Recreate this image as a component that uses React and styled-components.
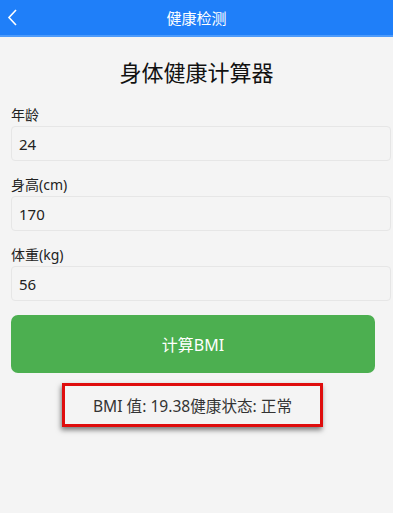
import React, { useState } from 'react';
import styled, { createGlobalStyle } from 'styled-components';

const GlobalStyle = createGlobalStyle`
    body {
        margin: 0;
        background: #f4f4f4;
        font-family: "Noto Sans", "Noto Sans CJK SC", sans-serif;
    }
`;

const Page = styled.div`
    min-height: 513px;
    background: #f4f4f4;
`;

const Header = styled.div`
    height: 35px;
    background: #1f7ff9;
    border-bottom: 2px solid #4d9bfb;
    position: relative;

    display: flex;
    align-items: center;
    justify-content: center;
`;

const HeaderTitle = styled.span`
    color: #fff;
    font-size: 15px;
    line-height: 20px;
`;

const BackButton = styled.div`
    position: absolute;
    left: 6px;
    top: 8px;
    width: 14px;
    height: 20px;
`;

const Main = styled.div`
    padding: 0 2px 0 11px;
`;

const Title = styled.h1`
    margin: 20px 0 0 0;
    font-size: 22px;
    line-height: 30px;
    font-weight: 400;
    color: #111;
    text-align: center;
    padding-right: 9px;
`;

const Field = styled.div`
    margin-top: ${p => p.first ? '18px' : '14px'};
`;

const Label = styled.div`
    font-size: 14px;
    line-height: 20px;
    color: #222;
    margin-bottom: 1px;
`;

const Input = styled.input`
    display: block;
    box-sizing: border-box;
    width: 100%;
    height: 35px;
    padding: 0 7px;
    border: 1px solid #e6e6e6;
    border-radius: 4px;
    background: #f4f4f4;
    font-family: inherit;
    font-size: 15px;
    color: #222;
    outline: none;
`;

const CalcButton = styled.button`
    display: block;
    box-sizing: border-box;
    width: calc(100% - 16px);
    height: 58px;
    margin-top: 14px;
    border: none;
    border-radius: 7px;
    background: #4caf50;
    color: #fff;
    font-family: inherit;
    font-size: 16px;
`;

const ResultWrap = styled.div`
    margin-top: 10px;
    padding-right: 17px;
    display: flex;
    justify-content: center;
`;

const Result = styled.div`
    box-sizing: border-box;
    height: 44px;
    padding: 0 28px;
    border: 3px solid #df0d0d;
    box-shadow: -1px 3px 5px rgba(0, 0, 0, 0.5);
    color: #333;
    font-size: 15.6px;

    display: flex;
    align-items: center;
`;

const fields = [
    { label: '年龄', value: '24' },
    { label: '身高(cm)', value: '170' },
    { label: '体重(kg)', value: '56' },
];

const App = () => {
    const [values, setValues] = useState(fields.map(f => f.value));

    return (
        <Page>
            <GlobalStyle />
            <Header>
                <BackButton>
                    <svg width="14" height="20" viewBox="0 0 14 20">
                        <polyline points="10,2 3,9.5 10,17" fill="none" stroke="#fff" strokeWidth="1.6" />
                    </svg>
                </BackButton>
                <HeaderTitle>健康检测</HeaderTitle>
            </Header>
            <Main>
                <Title>身体健康计算器</Title>
                {fields.map((f, i) => (
                    <Field key={f.label} first={i === 0}>
                        <Label>{f.label}</Label>
                        <Input
                            value={values[i]}
                            onChange={e => setValues(values.map((v, j) => j === i ? e.target.value : v))}
                        />
                    </Field>
                ))}
                <CalcButton>计算BMI</CalcButton>
                <ResultWrap>
                    <Result>BMI 值: 19.38健康状态: 正常</Result>
                </ResultWrap>
            </Main>
        </Page>
    );
}

export default App;
